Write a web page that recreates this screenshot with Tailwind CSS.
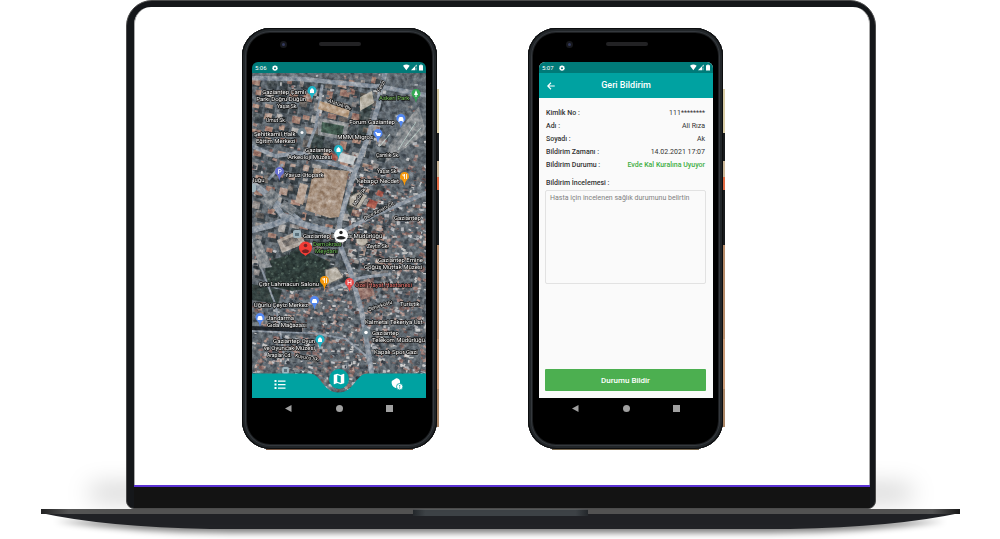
<!DOCTYPE html>
<html lang="tr">
<head>
<meta charset="utf-8">
<meta name="viewport" content="width=device-width, initial-scale=1">
<title>Geri Bildirim</title>
<script src="https://cdn.jsdelivr.net/npm/@tailwindcss/browser@4"></script>
</head>
<body class="bg-white font-[Roboto,sans-serif] overflow-x-hidden">
<svg class="hidden" aria-hidden="true">
  <symbol id="gear" viewBox="0 0 24 24"><path fill="currentColor" fill-rule="evenodd" d="M10 1h4l.6 3 2 .9L19.300 3l2.600 2.700-1.700 2.500.8 2L24 11v3l-3 .8-.8 2 1.700 2.500-2.600 2.600-2.700-1.700-2 .8L14 24h-4l-.6-3-2-.8-2.700 1.700-2.600-2.600 1.700-2.500-.8-2L0 14v-3l3-.8.8-2L2.100 5.700 4.700 3l2.700 1.900 2-.9zM12 8.500a4 4 0 1 0 0 8 4 4 0 0 0 0-8z"/></symbol>
  <symbol id="signals" viewBox="0 0 60 20"><path fill="currentColor" d="M0 5Q10-3 20 5L10 18zM24 18L41 1v6h-5v11zM38 10h2v8h-2zM48 3h4V1h4v2h4v16H48z"/></symbol>
</svg>

<main class="flex flex-col items-center">
  <div class="relative w-3/4 translate-x-px">
    <div class="absolute -left-9 -right-9 bottom-2.5 h-3 rounded-full bg-black/25 blur-md"></div>
    <section class="relative rounded-t-[26px] rounded-b-lg border border-[#4b4b4b] bg-[#15171a] pl-[7px] pr-[5px] pt-[6px]">
      <div class="flex h-[478px] items-start justify-center gap-[91px] rounded-t-[17px] border-x border-[#aaa] bg-white pt-[21px] pr-[39px]">

        <!-- Map phone -->
        <article class="relative h-[422px] w-[195px] shrink-0">
          <div class="absolute top-[61px] -right-0.5 h-[338px] w-2 bg-[linear-gradient(#d9cda6_0_44px,#191b1d_44px_72px,#c9b596_72px_88px,#e06a42_88px_101px,#191b1d_101px_156px,#b58a68_156px_250px,#c99a76_250px_300px,#a98565_300px)]"></div>
          <div class="absolute bottom-0 left-6 right-6 h-3 bg-[#7b5944]"></div>
          <div class="relative h-[421px] rounded-[28px] bg-black pl-2.5 pr-[11px] pt-[34px] shadow-[inset_0_0_0_1px_#0c0d0e,inset_0_0_0_3px_#222629,inset_0_0_0_4px_#34383d,inset_0_0_0_5px_#1c1e20]">
            <i class="absolute left-[38px] top-[13px] size-[7px] rounded-full border-2 border-[#17181c] bg-[#33395c]"></i>
            <i class="absolute left-[77px] top-[14px] h-1 w-[42px] rounded-full bg-[#222224]"></i>
            <div class="flex h-[336px] flex-col overflow-hidden rounded-t-[6px]">
              <header class="flex h-[11px] shrink-0 items-center bg-[#007a78] px-[3px] text-[6px] text-white">
                <span>5:06</span><svg class="ml-[5px] size-1.5"><use href="#gear"/></svg>
                <svg class="ml-auto h-[7px] w-5"><use href="#signals"/></svg>
              </header>
              <div class="relative flex-1">
                <svg id="map" class="block h-[325px] w-full" viewBox="252 73 174 325" preserveAspectRatio="none" font-family="Roboto, sans-serif" role="img" aria-label="Gaziantep uydu haritası">
                  <defs>
                    <filter id="grain" x="0" y="0" width="100%" height="100%" color-interpolation-filters="sRGB"><feTurbulence type="fractalNoise" baseFrequency=".22" numOctaves="3" seed="8"/><feColorMatrix values="1.300 .5 0 0 -.4  1.200 .55 0 0 -.37  1.100 .6 0 0 -.32  0 0 0 0 1"/></filter>
                    <path id="pin" d="M0 7C-1-.2-4.500 1-4.500-2.500a4.500 4.500 0 0 1 9 0C4.500 1 1-.2 0 7z"/>
                  </defs>
                  <rect x="252" y="73" width="174" height="325" fill="#5f676c"/>
                  <g id="houses"></g>
                  <g fill="#2f3c38">
                    <path d="M265 262l40-12 25 12-3 24-35 5-26-6z"/><path d="M290 252l16-6 6 20-22 6zM252 284l30 6-4 14-26-4z" opacity=".9"/>
                    <path d="M312 133l13 3-5 22-10-2zM360 92l14 4-8 40-8 6z" opacity=".6"/><path d="M345 205l8-14 6 3-9 22z" opacity=".8"/>
                  </g>
                  <g id="trees" fill="#52645a"></g>
                  <g fill="none" stroke="#8d969f" stroke-linecap="round" stroke-linejoin="round">
                    <path d="M385 73l-5 20-2 14-11 33-15 40-12 40-2 20 14 36 10 37 10 62" stroke-width="5"/>
                    <path d="M252 183l17 13 13 19 23 10 37 9" stroke-width="6"/>
                    <path d="M252 230l20-5 18-7" stroke-width="6"/>
                    <path d="M252 78l50 1 80 8 44 8" stroke-width="4.500"/>
                    <path d="M252 146l23 10 24-3 53 17M345 230l34-17 47-20" stroke-width="4"/>
                    <path d="M322 86l-6 40-10 26M282 165l-13 14M269 196l32 24M330 290l30-12 30-4" stroke-width="3"/>
                    <path d="M252 240l10 30 14 36 8 50M252 331l60 2 34 6 24 20" stroke-width="2"/>
                  </g>
                  <path d="M252 326l50 2v4l-50-2z" fill="#23282d"/>
                  <path d="M389 146l10-16 20-24 7 27-41 30z" fill="#878b8c"/><path d="M380 146l10-12M398 150l18-28M405 146l16-18" stroke="#b4c5c0" stroke-width="1"/>
                  <path d="M314 168l35 3-10 46-9 1-25-8z" fill="#a8937f"/>
                  <path d="M300 183l8 2-5 20-8-3z" fill="#b39f8e"/><path d="M320 101l30 9-2 8-30-9z" fill="#b89f84"/>
                  <path d="M318 118l31 5-3 17-28-5z" fill="#8d9090"/><path d="M322 122l22 4-2 10-21-4z" fill="#41584c"/><path d="M360 97l12-6 2 12-14 8z" fill="#b4ae9f"/>
                  <path d="M277 240l20-9 9 12-24 10z" fill="#b0a79d"/><path d="M282 241l13-5 5 6-15 5z" fill="#7a746e"/>
                  <path d="M260 200l12-12 8 8-10 14zM284 200l13 8-4 7-13-8z" fill="#7e8385"/>
                  <path d="M252 242l8-3 12 28-12 2z" fill="#858a8c"/>
                  <path d="M340 152l16 5-3 8-15-4z" fill="#c7cccd"/>
                  <g fill="#a85a4c"><path d="M370 199l8 3-3 7-9-3zM330 151l8 6-2 4-8-3zM378 190l6 2-2 5-6-2z"/></g>
                  <g fill="#b9b2a5" stroke="#77736c"><circle cx="362" cy="240" r="6"/><path d="M350 197l10-6 7 5-8 13-10-4z"/><path d="M325 270l12-3 6 10-16 8z"/></g>
                  <g fill="#97766c"><path d="M356 283l14-4 5 16-14 5z"/></g>
                  <rect x="252" y="73" width="174" height="325" filter="url(#grain)" style="mix-blend-mode:overlay" opacity=".4"/>
                  <g fill="#fff" font-size="6" stroke="#111" stroke-width="1.400" paint-order="stroke" stroke-linejoin="round">
                    <g text-anchor="end"><text x="306" y="94">Gaziantep Çamlı</text><text x="306" y="101">Parkı Doğru Düğün</text><text x="395" y="124">Forum Gaziantep</text><text x="373" y="139">MMM Migros</text><text x="332" y="152">Gaziantep</text><text x="332" y="159">Arkeoloji Müzesi</text><text x="399" y="183">Kebapçı Necdet</text><text x="319" y="286">Çıtır Lahmacun Salonu</text><text x="308" y="307">Uğurlu Çeyiz Merkez</text><text x="315" y="343">Gaziantep Oyun</text><text x="315" y="350">ve Oyuncak Müzesi</text></g>
                    <g><text x="254" y="136">Şehitkamil Halk</text><text x="256" y="143">Eğitim Merkezi</text><text x="285" y="177">Yavuz Otopark</text><text x="253" y="182">luğu</text><text x="303" y="238">Gaziantep İl Nüfus Müdürlüğü</text><text x="378" y="262">Gaziantep Emine</text><text x="364" y="269">Göğüş Mutfak Müzesi</text><text x="267" y="320">Jandarma</text><text x="267" y="327">Gıda Mağazası</text><text x="365" y="324">Kalmetal Tekeriya Üst</text><text x="372" y="335">Gaziantep</text><text x="372" y="342">Telekom Müdürlüğü</text><text x="374" y="354">Kapalı Spor Gazi</text><text x="394" y="220">Gaziantep</text><text x="400" y="306">Turistik</text></g>
                    <g font-size="5"><text x="277" y="108">Yaşar Sk.</text><text x="266" y="122">Umut Sk.</text><text x="376" y="157">Çamlık Sk.</text><text x="377" y="173">Yaşar Sk.</text><text x="328" y="102" transform="rotate(20 328 102)">Atatürk Blv.</text><text x="365" y="220" transform="rotate(-28 365 220)">Dere Kenarı Cd.</text><text x="367" y="248">Zeytin Sk.</text><text x="267" y="357">Araplar Cd.</text><text x="295" y="357" transform="rotate(10 295 357)">Kuyucu Sk.</text><text x="380" y="92" transform="rotate(-64 380 92)">Fevzi</text><text x="369" y="311" transform="rotate(-18 369 311)">Şehreküstü</text><text x="356" y="206" transform="rotate(-60 356 206)">Metin Sk.</text></g>
                    <text x="379" y="100" fill="#7cc65f">Askeri Park</text><g fill="#6fbf5a"><text x="313" y="246">Demokrasi</text><text x="315" y="253">Meydanı</text></g><text x="355" y="287" fill="#ef7a74">Özel Hayat Hastanesi</text>
                  </g>
                  <g id="pins">
                    <g fill="#1eb4c7"><use href="#pin" x="312" y="93"/><use href="#pin" x="338.500" y="152"/><use href="#pin" x="320" y="342"/></g>
                    <g fill="#5488f0"><use href="#pin" x="401" y="121"/><use href="#pin" x="378" y="136"/><use href="#pin" x="314.500" y="303"/><use href="#pin" x="260" y="320"/></g>
                    <use href="#pin" x="279.500" y="174" fill="#666fd0"/>
                    <g fill="#f6980b"><use href="#pin" x="404.500" y="179"/><use href="#pin" x="324.500" y="283"/></g>
                    <use href="#pin" x="416" y="96" fill="#34a853"/><use href="#pin" x="349.500" y="285" fill="#e94848"/>
                    <g fill="#72838d"><use href="#pin" x="302" y="135"/><use href="#pin" x="366" y="335"/></g>
                    <g fill="#9fb4bd"><rect x="293" y="230" width="8" height="8" rx="2"/><rect x="282" y="367" width="7" height="7" rx="2"/><rect x="250" y="184" width="6" height="8" rx="2"/></g>
                    <path d="M295 233h4v3h-4zM284 369h3v3h-3z" fill="#5b717c"/>
                    <g fill="#fff"><path d="M310 90l2-2 2 2v3h-4zM336.500 149l2-2 2 2v3h-4zM318 339l2-2 2 2v3h-4zM398.500 119l1-2h3l1 2v3h-1v-1h-3v1h-1zM375 132h1.500l.5 1h4l-1 3h-3zM312 301l1-2h3l1 2v2h-5zM257.500 318l1-2h3l1 2v2h-5zM414 95l2-5 2 5h-1.500v2h-1v-2z"/><circle cx="302" cy="132.500" r="1.500"/><circle cx="366" cy="332.500" r="1.800"/></g>
                    <g fill="none" stroke="#fff" stroke-width=".8"><path d="M278.500 174v-4.500h1.500a1.200 1.200 0 0 1 0 2.400h-1.500M403 174v2q1.500 1 1.500-2v5M406.500 174v5M323 278v2q1.500 1 1.500-2v5M326.500 278v5M348 280v5M351 280v5M348 282.500h3"/></g>
                  </g>
                  <path d="M301 252l4.500 4 4.500-4z" fill="#f03c36"/><circle cx="305.500" cy="248" r="6.500" fill="#f03c36"/><circle cx="305.500" cy="245.500" r="1.800" fill="#722"/><path d="M301.500 251q4-3.500 8 0l-2 2h-4z" fill="#722"/>
                  <circle cx="341" cy="235.500" r="7" fill="#fff"/><circle cx="341" cy="232.500" r="1.700" fill="#222"/><path d="M336 238q5-4 10 0-5 3-10 0z" fill="#222"/>
                  <path d="M252 373.500H309C322 373.500 322 392.500 338.500 392.500S355 373.500 368 373.500H426V398H252z" fill="#00a2a1"/>
                </svg>
                <nav class="absolute inset-x-0 bottom-0 flex h-7 items-center justify-between pl-[22px] pr-[23px] text-white">
                  <button aria-label="Liste" class="size-3"><svg viewBox="0 0 12 12" fill="currentColor"><path d="M.5 2h2v2h-2zM4 2.500h7.500v1.300H4zM.5 5.500h2v2h-2zM4 6h7.500v1.300H4zM.5 9h2v2h-2zM4 9.500h7.500v1.300H4z"/></svg></button>
                  <button aria-label="Harita" class="mb-[11px] grid size-5 shrink-0 place-items-center rounded-full bg-[#00a2a1]"><svg class="size-3.5" viewBox="0 0 24 24" fill="currentColor"><path d="M20.500 3l-.16.030L15 5.100 9 3 3.360 4.900a.5.5 0 0 0-.36.480V20.500a.5.5 0 0 0 .5.5l.16-.030L9 18.900l6 2.100 5.640-1.900a.5.5 0 0 0 .36-.480V3.500a.5.5 0 0 0-.5-.5zM15 19l-6-2.110V5l6 2.110V19z"/></svg></button>
                  <button aria-label="Bildirimler" class="size-3"><svg viewBox="0 0 12 12"><path fill="#fff" d="M4.800 .5C6.500 0 8.500 1 9 3v4L7 10H4.500Q2 9 1.200 7.200Q.2 5 .8 3z"/><circle cx="8.700" cy="8.700" r="3.200" fill="#fff" stroke="#00a2a1" stroke-width=".8"/><path d="M8.700 7v1.500M8.700 9.400v1" stroke="#00a2a1"/></svg></button>
                </nav>
              </div>
            </div>
            <div class="flex h-5 items-center justify-between px-[33px] text-[#a0a0a0]">
              <button aria-label="Geri" class="size-[7px]"><svg viewBox="0 0 7 7"><path fill="currentColor" d="M0 3.500L6.500 0v7z"/></svg></button>
              <button aria-label="Ana ekran" class="size-[7px] rounded-full bg-current"></button>
              <button aria-label="Son uygulamalar" class="size-[7px] bg-current"></button>
            </div>
          </div>
        </article>

        <!-- Feedback phone -->
        <article class="relative h-[422px] w-[195px] shrink-0">
          <div class="absolute top-[61px] -right-0.5 h-[338px] w-2 bg-[linear-gradient(#d9cda6_0_44px,#191b1d_44px_72px,#c9b596_72px_88px,#e06a42_88px_101px,#191b1d_101px_156px,#b58a68_156px_250px,#c99a76_250px_300px,#a98565_300px)]"></div>
          <div class="absolute bottom-0 left-6 right-6 h-3 bg-[#7b6a50]"></div>
          <div class="relative h-[421px] rounded-[28px] bg-black pl-[11px] pr-2.5 pt-[34px] shadow-[inset_0_0_0_1px_#0c0d0e,inset_0_0_0_3px_#222629,inset_0_0_0_4px_#34383d,inset_0_0_0_5px_#1c1e20]">
            <i class="absolute left-[38px] top-[13px] size-[7px] rounded-full border-2 border-[#17181c] bg-[#33395c]"></i>
            <i class="absolute left-[78px] top-[14px] h-1 w-[42px] rounded-full bg-[#222224]"></i>
            <div class="flex h-[336px] flex-col overflow-hidden rounded-t-[6px] bg-[#fafafa]">
              <header class="flex h-[11px] shrink-0 items-center bg-[#007a78] px-[3px] text-[6px] text-white">
                <span>5:07</span><svg class="ml-[5px] size-1.5"><use href="#gear"/></svg>
                <svg class="ml-auto h-[7px] w-5"><use href="#signals"/></svg>
              </header>
              <div class="relative flex h-[25px] shrink-0 items-center justify-center bg-[#00a2a1] text-white">
                <button aria-label="Geri dön" class="absolute left-2 size-2"><svg viewBox="0 0 16 16" fill="none" stroke="currentColor" stroke-width="2.200"><path d="M15.500 8H2M8 1.500L1.500 8 8 14.500"/></svg></button>
                <h1 class="text-[9px] font-medium">Geri Bildirim</h1>
              </div>
              <form class="flex flex-1 flex-col pl-1.5 pr-[7px] pb-[7px] pt-[9px] text-[7px] leading-[13px] text-[#333]">
                <dl class="grid grid-cols-[auto_1fr] px-px">
                  <dt class="font-medium">Kimlik No :</dt><dd class="text-right">111********</dd>
                  <dt class="font-medium">Adı :</dt><dd class="text-right">Ali Rıza</dd>
                  <dt class="font-medium">Soyadı :</dt><dd class="text-right">Ak</dd>
                  <dt class="font-medium">Bildirim Zamanı :</dt><dd class="text-right">14.02.2021 17:07</dd>
                  <dt class="font-medium">Bildirim Durumu :</dt><dd class="text-right font-medium text-[#3eae43]">Evde Kal Kuralına Uyuyor</dd>
                </dl>
                <label for="review" class="mt-[5px] px-px font-medium">Bildirim İncelemesi :</label>
                <textarea id="review" class="h-[94px] w-full resize-none rounded-xs border border-[#e2e2e2] bg-transparent px-1 py-0.5 leading-[11px] placeholder:text-[#808080]" placeholder="Hasta için incelenen sağlık durumunu belirtin"></textarea>
                <button type="button" class="mt-auto h-[22px] rounded-[1px] bg-[#4caf50] text-[8px] font-medium text-white">Durumu Bildir</button>
              </form>
            </div>
            <div class="flex h-5 items-center justify-between px-[33px] text-[#a0a0a0]">
              <button aria-label="Geri" class="size-[7px]"><svg viewBox="0 0 7 7"><path fill="currentColor" d="M0 3.500L6.500 0v7z"/></svg></button>
              <button aria-label="Ana ekran" class="size-[7px] rounded-full bg-current"></button>
              <button aria-label="Son uygulamalar" class="size-[7px] bg-current"></button>
            </div>
          </div>
        </article>
      </div>
      <div class="h-[2px] bg-[#5b32d4]"></div>
      <div class="h-[21px] bg-[#131313]"></div>
    </section>
  </div>
  <!-- Laptop base -->
  <svg class="block h-[30px] w-[92%]" viewBox="0 0 920 30" preserveAspectRatio="none" aria-hidden="true">
    <defs><linearGradient id="rim"><stop offset="0" stop-color="#222"/><stop offset=".03" stop-color="#555"/><stop offset=".97" stop-color="#555"/><stop offset="1" stop-color="#181818"/></linearGradient>
    <linearGradient id="lip"><stop offset="0" stop-color="#25292d"/><stop offset=".07" stop-color="#3f4448"/><stop offset=".93" stop-color="#3f4448"/><stop offset="1" stop-color="#25292d"/></linearGradient>
    <filter id="soft" x="-5%" y="-50%" width="110%" height="200%"><feGaussianBlur stdDeviation="3"/></filter></defs>
    <path d="M15 12H905Q820 24 730 24H190Q100 24 15 12z" fill="#000" opacity=".5" filter="url(#soft)"/>
    <path d="M1 4Q65 18 170 20H750Q855 18 920 4z" fill="#212226"/>
    <path d="M1 0H920V5H1z" fill="url(#rim)"/>
    <path d="M373 0H548V7H373z" fill="url(#lip)"/><path d="M373 0H548" stroke="#777" stroke-width="1"/>
  </svg>
</main>
<script>
  // Scatter rooftops over the map: large aligned blocks in the north-west,
  // small crowded houses in the old town to the south and east.
  (function () {
    var seed = 17, out = '';
    function rnd() { seed = (seed * 16807) % 2147483647; return seed / 2147483647; }
    function roof(x, y, w, h, fill, turn) {
      return '<rect x="' + x.toFixed(1) + '" y="' + y.toFixed(1) + '" width="' + w.toFixed(1) + '" height="' + h.toFixed(1) + '" fill="' + fill + '" transform="rotate(' + turn + ' ' + x.toFixed(1) + ' ' + y.toFixed(1) + ')"/>';
    }
    var blocks = ['#9c7a6c', '#b29a8c', '#8f8a86', '#6b6661', '#a98575', '#a9a6a2', '#4d5557'];
    var roofs = ['#856a66', '#a99087', '#b0b2b5', '#3d444b', '#646c72', '#94756e', '#c6c6c5', '#434a50', '#7c7a78', '#775e59'];
    for (var gy = 76; gy < 280; gy += 12) {
      for (var gx = 252; gx < 375; gx += 12) {
        var bx = gx + rnd() * 5, by = gy + rnd() * 5;
        out += roof(bx + 2, by + 2, 8, 7, '#394145', 12) + roof(bx, by, 4 + rnd() * 6, 3 + rnd() * 5, blocks[Math.floor(rnd() * blocks.length)], 12);
      }
    }
    for (var i = 0; i < 3600; i++) {
      var x = 252 + rnd() * 174, y = 73 + rnd() * 325;
      if (y > 285 || x > 345 && y > 165 || i % 9 === 0) {
        out += roof(x, y, 1.5 + rnd() * 3.5, 1 + rnd() * 2.5, roofs[Math.floor(rnd() * roofs.length)], Math.floor(-10 + rnd() * 40));
      }
    }
    document.getElementById('houses').innerHTML = out;
    var trees = '';
    for (var t = 0; t < 70; t++) {
      trees += '<circle cx="' + (268 + rnd() * 56).toFixed(1) + '" cy="' + (256 + rnd() * 30).toFixed(1) + '" r="' + (0.4 + rnd() * 0.9).toFixed(1) + '"/>';
    }
    document.getElementById('trees').innerHTML = trees;
  })();
</script>
</body>
</html>
